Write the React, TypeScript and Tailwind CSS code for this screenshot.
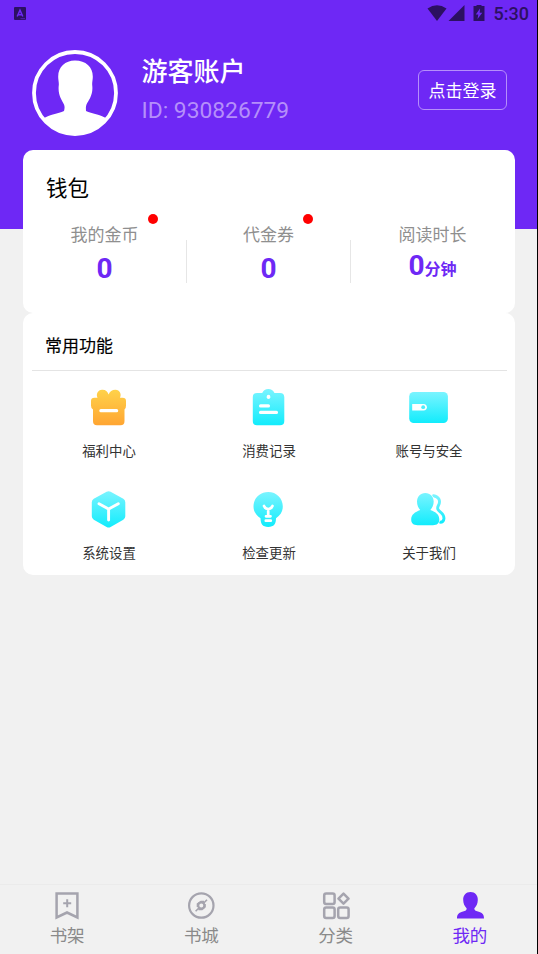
import React from "react";

const wallet = [
    { label: "我的金币", value: "0", dot: "left-[125px]" },
    { label: "代金券", value: "0", dot: "left-[116px]" },
    { label: "阅读时长", value: "0", unit: "分钟" },
];

const GiftIcon = () => (
    <svg className="w-10 h-10" viewBox="0 0 40 40" fill="none">
        <defs>
            <linearGradient id="gold" x1="0" y1="0" x2="0" y2="1">
                <stop offset="0" stopColor="#ffd24a" />
                <stop offset="1" stopColor="#ffa532" />
            </linearGradient>
        </defs>
        <path
            fill="url(#gold)"
            d="M8.500 9.700C6.800 6 8.800 2 13 1.700C16.500 1.500 18.500 3.500 19.600 6.500C20.700 3.500 23 1.700 26.500 1.700C30.800 2 32.800 6 31 9.700H33.500Q37 9.700 37 13V17.500Q37 20.800 35.500 21.500V33Q35.500 37.300 31.500 37.300H8Q4 37.300 4 33V21.500Q2 20.800 2 17.500V13Q2 9.700 5.500 9.700Z"
        />
        <rect x="10.300" y="21" width="18.900" height="3.200" rx="1.500" fill="#fff" />
    </svg>
);

const RecordIcon = () => (
    <svg className="w-10 h-10" viewBox="0 0 40 40" fill="none">
        <path
            fill="url(#aqua)"
            d="M8 5H13.200Q15 1 19.300 1T25.500 5H31Q35.300 5 35.300 9.300V33Q35.300 37.300 31 37.300H8Q3.800 37.300 3.800 33V9.300Q3.800 5 8 5Z"
        />
        <rect x="17.700" y="6.700" width="3.600" height="4.400" rx="1.800" fill="#fff" />
        <rect x="10" y="16.200" width="11" height="3.400" rx="1.500" fill="#fff" />
        <rect x="10" y="22.700" width="19" height="3.400" rx="1.500" fill="#fff" />
    </svg>
);

const WalletIcon = () => (
    <svg className="w-10 h-10" viewBox="0 0 40 40" fill="none">
        <rect x=".200" y="4" width="38.700" height="31" rx="4.500" fill="url(#aqua)" />
        <path d="M3.200 16H14.500Q17.900 16.300 17.900 19.200T14.500 22.400H3.200Z" fill="#fff" />
        <circle cx="14.200" cy="19.200" r="1.900" fill="#4beefa" />
    </svg>
);

const BoxIcon = () => (
    <svg className="w-10 h-10" viewBox="0 0 40 40" fill="none">
        <path
            fill="url(#aqua)"
            d="M17.600 1.700Q19.600 .600 21.600 1.700L34.300 8.800Q36.300 10 36.300 12.300V26.300Q36.300 28.600 34.300 29.800L21.600 36.900Q19.600 38.100 17.600 36.900L4.800 29.800Q2.800 28.600 2.800 26.300V12.300Q2.800 10 4.800 8.800Z"
        />
        <path d="M10 13.700L19.600 19L29.300 13.700M19.600 19V30" stroke="#fff" strokeWidth="2.900" strokeLinecap="round" />
    </svg>
);

const BulbIcon = () => (
    <svg className="w-10 h-10" viewBox="0 0 40 40" fill="none">
        <path
            fill="url(#aqua)"
            d="M19.200 2C27.500 2 33.800 8.300 33.800 16.300C33.800 21.500 31.500 25 27 28.300C27 34 25 36.900 19.200 36.900S11.700 34 11.500 28.300C7 25 4.500 21.500 4.500 16.300C4.500 8.300 10.900 2 19.200 2Z"
        />
        <path
            d="M15 16C16 18.500 18.500 19 19.200 19S22.500 18.500 23.500 16M19.200 19V25.500M17 26.300H21.500M16.800 30.700H21.800"
            stroke="#fff"
            strokeWidth="2.700"
            strokeLinecap="round"
        />
    </svg>
);

const PeopleIcon = () => (
    <svg className="w-10 h-10" viewBox="0 0 40 40" fill="none">
        <path
            d="M24.500 5.700C30 6.500 31.800 11 29.500 15.200C27.500 19 29.300 20.300 32 22.500C36.500 26.500 35.500 32.300 31.300 32.300"
            stroke="url(#aqua)"
            strokeWidth="2.900"
            strokeLinecap="round"
        />
        <path
            fill="url(#aqua)"
            stroke="#fff"
            strokeWidth="1.400"
            className="[paint-order:stroke]"
            d="M16.300 2.900C21.300 2.900 24.700 6.800 24.700 11.500C24.700 15 23.300 17.700 21.300 20C27 22 30.300 24.500 30.300 29.500C30.300 33.500 28 35.200 24 35.200H8.500C4.500 35.200 2.200 33.500 2.200 29.500C2.200 24.500 6 22 11.200 20C9.300 17.700 8 15 8 11.500C8 6.800 11.300 2.900 16.300 2.900Z"
        />
    </svg>
);

const features = [
    { label: "福利中心", icon: <GiftIcon /> },
    { label: "消费记录", icon: <RecordIcon /> },
    { label: "账号与安全", icon: <WalletIcon /> },
    { label: "系统设置", icon: <BoxIcon /> },
    { label: "检查更新", icon: <BulbIcon /> },
    { label: "关于我们", icon: <PeopleIcon /> },
];

const tabs = [
    {
        label: "书架",
        icon: (
            <svg className="w-7 h-7" viewBox="0 0 28 28" fill="none" stroke="currentColor" strokeWidth="2">
                <path d="M3.600 1.500H24.400V25.500L14 20.500L3.600 25.500Z" strokeWidth="2.500" />
                <path d="M14.200 7.200V15.200M10.200 11.200H18.200" />
            </svg>
        ),
    },
    {
        label: "书城",
        icon: (
            <svg className="w-7 h-7" viewBox="0 0 28 28" fill="none" stroke="currentColor" strokeWidth="2">
                <circle cx="14.300" cy="13.500" r="12.200" strokeWidth="2.200" />
                <circle cx="14.300" cy="13.500" r="3" />
                <path d="M16.500 11.300L20 7.800M12.100 15.700L8.600 19.200M10.500 15V12L14 9.500L17 9.500M18 12V15L15 17.500H11.500" strokeWidth="1.600" />
            </svg>
        ),
    },
    {
        label: "分类",
        icon: (
            <svg className="w-7 h-7" viewBox="0 0 28 28" fill="none" stroke="currentColor" strokeWidth="2.500">
                <rect x="2.200" y="1.500" width="10.400" height="10.400" rx="2" />
                <rect x="2.200" y="15.500" width="10.400" height="10.400" rx="2" />
                <rect x="16.200" y="15.500" width="10.400" height="10.400" rx="2" />
                <path d="M21.500 1.700L26.500 6.700L21.500 11.700L16.500 6.700Z" strokeLinejoin="round" />
            </svg>
        ),
    },
    {
        label: "我的",
        active: true,
        icon: (
            <svg className="w-7 h-7" viewBox="0 0 28 28" fill="currentColor">
                <path d="M14.500 0C19 0 22 3.500 21.800 8C21.700 11.500 20.500 14 18.300 16.500C18.300 18.500 20 19 23.500 20C27 21.200 28 23 28 26.500H1C1 23 2 21.200 5.500 20C9 19 10.700 18.500 10.700 16.500C8.500 14 7.300 11.500 7.200 8C7 3.500 10 0 14.500 0Z" />
            </svg>
        ),
    },
];

export default function App() {
    return (
        <div className="w-[538px] h-[954px] flex flex-col bg-[#f1f1f1] border-r border-black font-['Roboto','Noto_Sans_CJK_SC',sans-serif] overflow-hidden">
            {/* Shared gradient */}
            <svg className="absolute w-0 h-0">
                <defs>
                    <linearGradient id="aqua" x1="0" y1="0" x2="0" y2="1">
                        <stop offset="0" stopColor="#7af4ff" />
                        <stop offset="1" stopColor="#12ecfc" />
                    </linearGradient>
                </defs>
            </svg>

            <header className="h-[229px] shrink-0 bg-[#6e28f5]">
                {/* Status bar */}
                <div className="h-7 flex items-center justify-between pl-[14px] pr-[8px] text-[#2c1062]">
                    <svg className="w-3 h-[13px] -mt-px" viewBox="0 0 12 13">
                        <rect width="12" height="13" rx="1" fill="currentColor" />
                        <path d="M3.200 9.500L6 3.200L8.800 9.500M4.300 7.700H7.700" fill="none" stroke="#6e28f5" strokeWidth="1.500" />
                        <path d="M6.500 11.700H11" stroke="#6e28f5" strokeWidth=".6" />
                    </svg>
                    <div className="flex items-center">
                        <svg className="w-[60px] h-[18px]" viewBox="0 0 60 18" fill="currentColor">
                            <path d="M.500 3.500Q10 -3 19.500 3.500L10 16Z" />
                            <path d="M21.500 16H37.500V0Z" />
                            <path
                                fillRule="evenodd"
                                d="M49.500 -.500H54.500V1H57.500V16H46.500V1H49.500ZM53 3.500L48.800 9.500H51.300L50.500 14L55.300 7.800H52.700Z"
                            />
                        </svg>
                        <span className="ml-[7px] text-lg leading-7 font-medium">5:30</span>
                    </div>
                </div>

                {/* Account */}
                <div className="flex items-center mt-[22px] pl-8 pr-[30px]">
                    <svg className="w-[86px] h-[86px]" viewBox="0 0 86 86">
                        <path
                            fill="#fff"
                            d="M43 10.500C54 10.500 61 17 60.800 27C60.800 30 60 32 60.200 35C61.500 45 56.500 50 54.500 54.500C53.500 57 54 59 54 61C60 63.500 68 64.500 75 68.500A41 41 0 0 1 11 68.500C18 64.500 26 63.500 32 61C32.500 59 33 57 32 54.500C30 50 25.500 45 26.800 35C27 32 26.200 30 26.200 27C26 17 33 10.500 43 10.500Z"
                        />
                        <circle cx="43" cy="43" r="41" fill="none" stroke="#fff" strokeWidth="3.800" />
                    </svg>
                    <div className="ml-[23.500px] -mt-[3px] flex-1">
                        <h1 className="text-[26px] leading-9 font-medium text-white">游客账户</h1>
                        <p className="mt-[3px] text-[22.800px] leading-9 text-[#b58ffa]">ID: 930826779</p>
                    </div>
                    <button className="w-[89px] h-10 mt-[-6px] pt-[3px] rounded-md border-[1.500px] border-[#b58ffa] text-[17px] text-white whitespace-nowrap">
                        点击登录
                    </button>
                </div>
            </header>

            {/* Wallet */}
            <section className="mt-[-79px] ml-[23px] w-[492px] h-[163px] shrink-0 rounded-[10px] bg-white pt-[24px]">
                <h2 className="pl-[23px] text-[21.500px] leading-[30px] text-black">钱包</h2>
                <div className="grid grid-cols-3 mt-[5px]">
                    {wallet.map((item) => (
                        <div key={item.label} className="relative h-[74px] pt-[14px] pr-px text-center">
                            {item.dot && <span className={`absolute top-[5px] w-[10px] h-[10px] rounded-full bg-[#ff0000] ${item.dot}`} />}
                            <div className="text-[17px] leading-6 text-[#8f8f8f]">{item.label}</div>
                            <div className={`text-[28px] font-bold text-[#6e28f5] ${item.unit ? "leading-[38px]" : "leading-[44px]"}`}>
                                {item.value}
                                {item.unit && <span className="text-base leading-none">{item.unit}</span>}
                            </div>
                            {!item.unit && <span className="absolute right-0 top-[31px] w-px h-[43px] bg-[#e6e6e6]" />}
                        </div>
                    ))}
                </div>
            </section>

            {/* Common functions */}
            <section className="ml-[23px] w-[492px] h-[262px] shrink-0 rounded-[10px] bg-white">
                <h2 className="h-[58px] ml-[8.500px] mr-[8.500px] pl-[13.500px] pt-[9px] border-b border-[#e4e4e4] text-[17px] leading-[49px] font-normal [-webkit-text-stroke:0.15px_#000] text-black">
                    常用功能
                </h2>
                <div className="grid grid-cols-3 mx-[6px] pt-[17px]">
                    {features.map((item) => (
                        <div key={item.label} className="h-[102px] flex flex-col items-center text-[13.400px] leading-5 text-[#333]">
                            {item.icon}
                            <span className="mt-[14px]">{item.label}</span>
                        </div>
                    ))}
                </div>
            </section>

            {/* Bottom tabs */}
            <nav className="mt-auto h-[70px] shrink-0 grid grid-cols-4 border-t border-[#ebebeb]">
                {tabs.map((tab) => (
                    <div
                        key={tab.label}
                        className={`flex flex-col items-center pt-[7px] ${tab.active ? "text-[#6e28f5]" : "text-[#a5a4ae]"}`}
                    >
                        {tab.icon}
                        <span className={`mt-[3.500px] text-[17.500px] leading-6 ${tab.active ? "" : "text-[#8a8a8a]"}`}>{tab.label}</span>
                    </div>
                ))}
            </nav>
        </div>
    );
}
